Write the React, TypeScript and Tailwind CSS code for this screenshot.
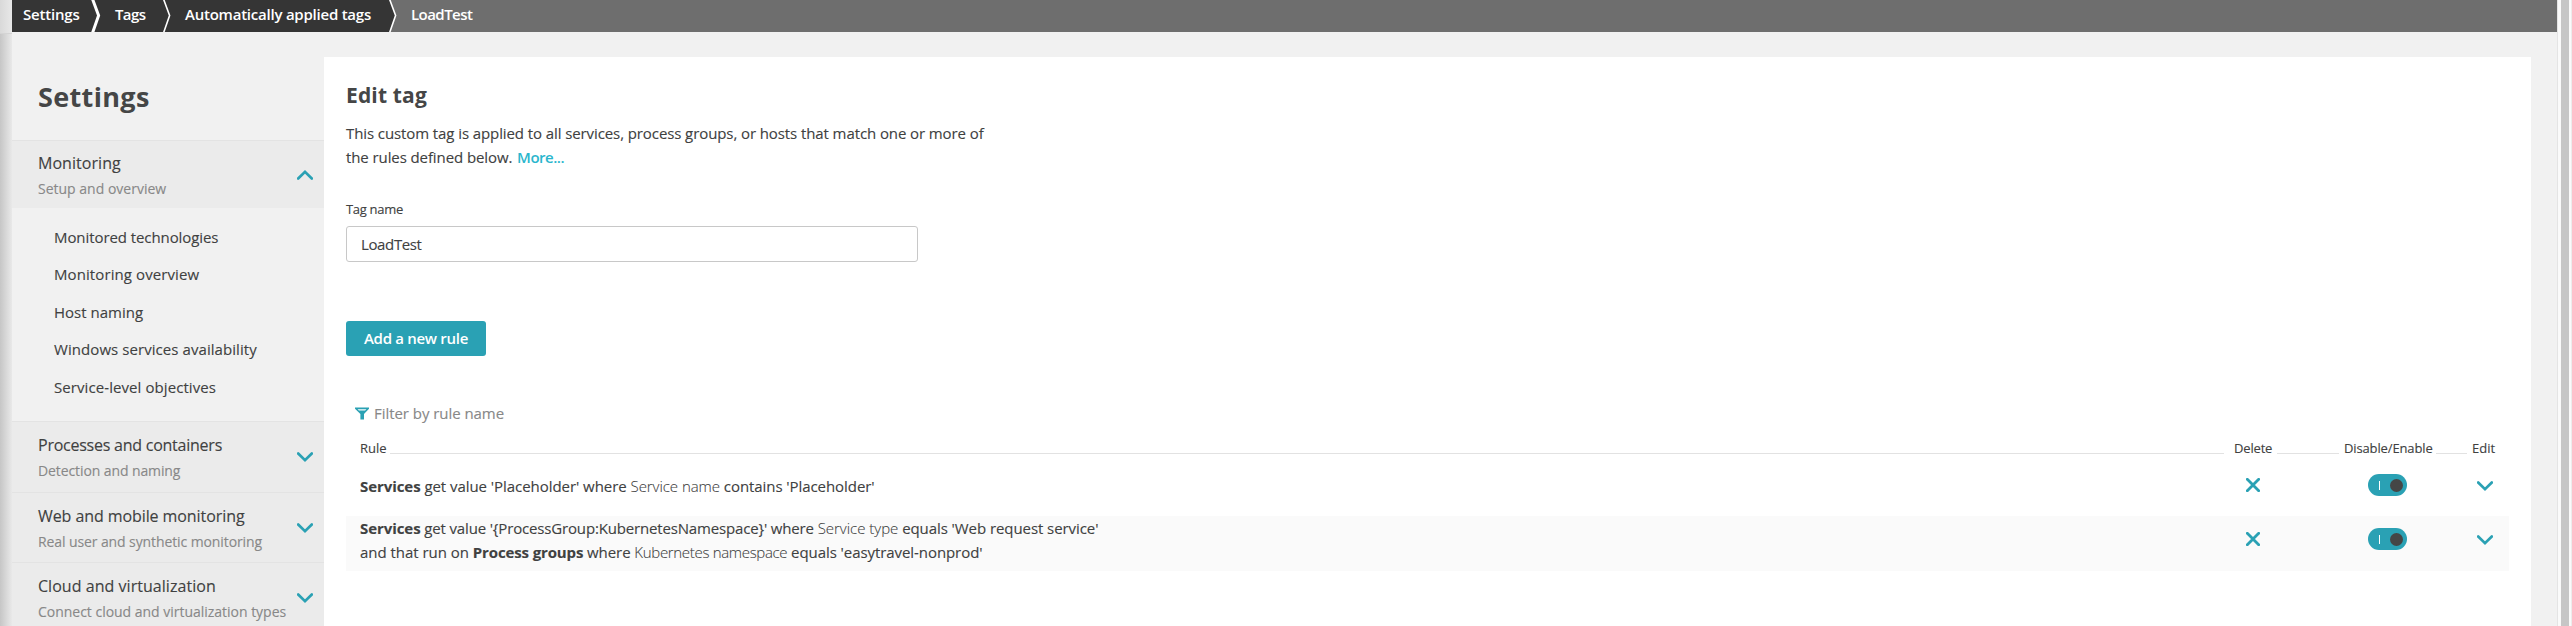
import React from "react";

type SectionProps = {
  title: string;
  titleTracking: string;
  text: string;
  textTracking: string;
  up?: boolean;
  size: string;
};

function Chevron({ up = false }: { up?: boolean }) {
  return (
    <svg width="16" height="10" viewBox="0 0 16 10" fill="none" className="block shrink-0">
      <path d={up ? "M1.2 8.5 8 1.9l6.8 6.6" : "M1.2 1.5 8 8.1l6.8-6.6"} stroke="#2aa1b4" strokeWidth="2.7" strokeLinecap="round" />
    </svg>
  );
}

function Separator({ bold = false, next = "#353535" }: { bold?: boolean; next?: string }) {
  return (
    <svg width="10" height="32" viewBox="0 0 10 32" className="block shrink-0">
      <rect width="10" height="32" fill={next} />
      <path d="M0 0h2l6 15.5L2 32H0z" fill="#353535" />
      <path d="M1.5 -1 7.6 15.5 1.5 33" fill="none" stroke="#fff" strokeWidth={bold ? 3 : 1.6} />
    </svg>
  );
}

function Toggle() {
  return (
    <div className="flex h-[22px] w-[39px] items-center justify-between rounded-full bg-[#2aa1b4] pr-1 pl-[11px]">
      <span className="h-[9px] w-px bg-white" />
      <span className="h-[13px] w-[13px] rounded-full bg-[#454646]" />
    </div>
  );
}

function DeleteIcon() {
  return (
    <svg width="14" height="14" viewBox="0 0 14 14" className="block">
      <path d="m1.3 1.3 11.4 11.4M12.7 1.3 1.3 12.7" stroke="#2aa1b4" strokeWidth="2.8" strokeLinecap="round" />
    </svg>
  );
}

function FilterIcon() {
  return (
    <svg width="14" height="13" viewBox="0 0 14 13" className="block shrink-0">
      <path fillRule="evenodd" d="M0 0.5h14v1.3L9 7v5.5H5.4V7L0 1.8zM2.6 2.2l1.3 1.2h6.2l1.3-1.2z" fill="#2aa1b4" />
    </svg>
  );
}

function Section({ title, titleTracking, text, textTracking, up = false, size }: SectionProps) {
  return (
    <div className={`flex shrink-0 items-center justify-between border-t border-[#e3e3e3] bg-[#ebebeb] pr-[11px] pl-[26px] ${size}`}>
      <div className="whitespace-nowrap">
        <div className={`h-[25px] text-base leading-[26px] ${titleTracking}`}>{title}</div>
        <div className={`h-[25px] text-sm leading-[27px] text-[#888888] ${textTracking}`}>{text}</div>
      </div>
      <Chevron up={up} />
    </div>
  );
}

function RowActions() {
  return (
    <>
      <div className="flex h-[46px] items-center justify-center"><DeleteIcon /></div>
      <div className="flex h-[46px] items-center justify-end pr-[25px]"><Toggle /></div>
      <div className="flex h-[48px] items-center justify-end pr-1"><Chevron /></div>
    </>
  );
}

const links = [
  { label: "Monitored technologies", tracking: "tracking-[-0.08px]" },
  { label: "Monitoring overview", tracking: "tracking-[0.09px]" },
  { label: "Host naming", tracking: "tracking-normal" },
  { label: "Windows services availability", tracking: "tracking-[0.07px]" },
  { label: "Service-level objectives", tracking: "tracking-[0.08px]" },
];

const light = "font-light [-webkit-text-stroke:0.1px]";

export default function App() {
  return (
    <div className="flex h-[626px] w-[2572px] overflow-hidden bg-[#f1f1f1] [font-family:'Open_Sans',sans-serif] text-[15px] text-[#404141] [-webkit-text-stroke:0.12px]">
      <div className="flex w-3 shrink-0 flex-col">
        <div className="h-[34px] border-b border-[#d4d4d4] bg-linear-to-r from-[#d9d9d9] to-[#e8e8e8]" />
        <div className="flex-1 bg-linear-to-r from-[#c6c6c6] to-[#e9e9e9]" />
      </div>
      <div className="flex w-[2545px] shrink-0 flex-col">
        <nav className="flex h-8 shrink-0 bg-[#6e6e6e] leading-[29px] font-semibold whitespace-nowrap text-white [-webkit-text-stroke:0px]">
          <div className="w-[79px] bg-[#353535] pl-[11px] tracking-[-0.2px]">Settings</div>
          <Separator bold />
          <div className="w-[61px] bg-[#353535] pl-[14px] tracking-[-0.6px]">Tags</div>
          <Separator />
          <div className="w-[216px] bg-[#353535] pl-[13px] tracking-[-0.23px]">Automatically applied tags</div>
          <Separator next="#6e6e6e" />
          <div className="pl-[13px] tracking-[-0.55px]">LoadTest</div>
        </nav>
        <div className="flex flex-1">
          <aside className="flex w-[312px] shrink-0 flex-col">
            <h1 className="h-[108px] pt-[43px] pl-[26px] text-[27px] leading-[43px] font-bold tracking-[0.35px] text-[#454646] [-webkit-text-stroke:0px]">Settings</h1>
            <Section title="Monitoring" titleTracking="tracking-[0.05px]" text="Setup and overview" textTracking="tracking-normal" up size="h-[68px]" />
            <ul className="h-[213px] shrink-0 pt-[11px] pl-[42px]">
              {links.map((l) => (
                <li key={l.label} className={`h-[37.4px] leading-[37.4px] whitespace-nowrap ${l.tracking}`}>{l.label}</li>
              ))}
            </ul>
            <Section title="Processes and containers" titleTracking="tracking-[-0.24px]" text="Detection and naming" textTracking="tracking-[-0.1px]" size="h-[71px]" />
            <Section title="Web and mobile monitoring" titleTracking="tracking-[-0.08px]" text="Real user and synthetic monitoring" textTracking="tracking-[-0.1px]" size="h-[70px]" />
            <Section title="Cloud and virtualization" titleTracking="tracking-[0.04px]" text="Connect cloud and virtualization types" textTracking="tracking-[-0.02px]" size="h-[71px]" />
          </aside>
          <main className="mt-[25px] w-[2207px] bg-white px-[22px]">
            <h2 className="pt-[22px] text-[21px] leading-[32px] font-bold tracking-[0.16px] text-[#454646] [-webkit-text-stroke:0px]">Edit tag</h2>
            <p className="mt-[10px] leading-6 tracking-[-0.094px]">
              This custom tag is applied to all services, process groups, or hosts that match one or more of
              <br />
              the rules defined below. <a className="ml-px font-semibold tracking-[-0.5px] text-[#2ab6cd] [-webkit-text-stroke:0px]">More...</a>
            </p>
            <div className="mt-[30px] text-[13px] leading-5 tracking-[-0.3px]">Tag name</div>
            <div className="mt-[7px] h-9 w-[572px] rounded-[3px] border border-[#c8c8c8] pl-[14px] leading-[34px] tracking-[-0.37px]">LoadTest</div>
            <button className="mt-[59px] block h-[35px] w-[140px] rounded-[3px] bg-[#2aa1b4] leading-[35px] font-semibold tracking-[-0.3px] text-white [-webkit-text-stroke:0px]">Add a new rule</button>
            <div className="mt-[46px] flex h-[22px] items-center gap-[5px] pl-[9px] tracking-[-0.05px] text-[#888888]">
              <FilterIcon />
              Filter by rule name
            </div>
            <div className="mt-[14px] flex h-5 w-[2163px] items-start pl-[14px] text-[13px] leading-5">
              <span className="w-[30px]">Rule</span>
              <span className="mt-[15px] h-px w-[1834px] bg-[#e2e2e2]" />
              <span className="w-[53px] pl-[10px] tracking-[-0.17px]">Delete</span>
              <span className="mt-[15px] h-px w-[62px] bg-[#e2e2e2]" />
              <span className="w-[97px] pl-[5px] tracking-[-0.13px]">Disable/Enable</span>
              <span className="mt-[15px] h-px w-[31px] bg-[#e2e2e2]" />
              <span className="pl-[5px]">Edit</span>
            </div>
            <div className="grid h-[58px] w-[2163px] grid-cols-[1888px_38px_160px_65px] items-start pt-1 leading-6">
              <div className="pt-3 pl-[14px] tracking-[-0.05px]">
                <b className="tracking-[-0.07px]">Services</b> get value 'Placeholder' where{" "}
                <span className={`tracking-[-0.05px] ${light}`}>Service name</span> <span className="tracking-[-0.07px]">contains 'Placeholder'</span>
              </div>
              <RowActions />
            </div>
            <div className="grid h-[55px] w-[2163px] grid-cols-[1888px_38px_160px_65px] items-start bg-[#fafafa] leading-6">
              <div className="pl-[14px] tracking-[-0.07px]">
                <b className="tracking-[-0.07px]">Services</b> <span className="tracking-[-0.16px]">get value {"'{ProcessGroup:KubernetesNamespace}'"} where</span>{" "}
                <span className={`tracking-[-0.02px] ${light}`}>Service type</span> equals 'Web request service'
                <br />
                <span className="tracking-[-0.03px]">and that run on</span> <b className="tracking-[-0.13px]">Process groups</b> where{" "}
                <span className={`tracking-[-0.32px] ${light}`}>Kubernetes namespace</span> equals 'easytravel-nonprod'
              </div>
              <RowActions />
            </div>
          </main>
        </div>
      </div>
      <div className="w-px shrink-0 bg-[#e4e4e4]" />
      <div className="w-[3px] shrink-0 bg-[#fafafa]" />
      <div className="w-2 shrink-0 bg-[#c6c6c6]" />
      <div className="w-[3px] shrink-0 border-r border-[#ececec] bg-[#fafafa]" />
    </div>
  );
}
